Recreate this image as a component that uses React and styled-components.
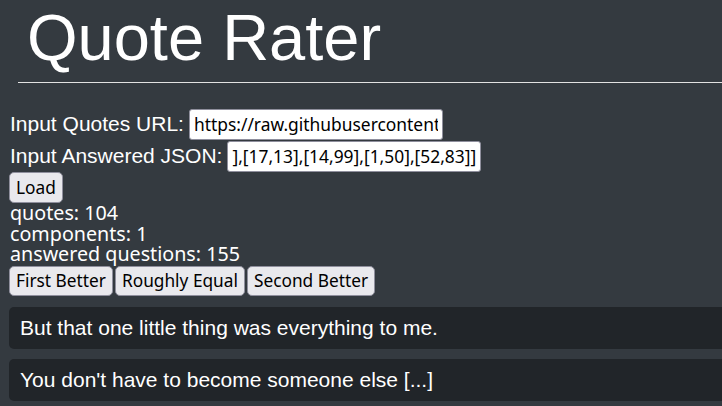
import React from 'react';
import styled, { createGlobalStyle } from 'styled-components';

const GlobalStyle = createGlobalStyle`
  html, body {
    margin: 0;
    padding: 0;
    background: #343a40;
    color: #fff;
    overflow: hidden;
  }
`;

const Page = styled.div`
  min-height: 406px;
`;

const Title = styled.h1`
  margin: 0 0 0 18px;
  padding: 6px 0 12px 9px;
  font-family: 'Liberation Sans', Arial, sans-serif;
  font-weight: 400;
  font-size: 65px;
  line-height: 64px;
  border-bottom: 1.3px solid #e2e2e2;
`;

const Content = styled.div`
  padding: 25px 0 0 9px;
`;

const Field = styled.div`
  display: flex;
  align-items: center;
  height: 32px;
`;

const Label = styled.label`
  font-family: 'Liberation Sans', Arial, sans-serif;
  font-size: 21px;
  margin: 0 5px 0 1px;
`;

const TextInput = styled.input`
  box-sizing: border-box;
  width: 254px;
  height: 31px;
  padding: 0 4px;
  border: 1px solid #8f8f9d;
  border-radius: 3px;
  background: #fff;
  color: #000;
  font-family: 'Noto Sans', sans-serif;
  font-size: 17.4px;
  outline: none;
`;

const Button = styled.button`
  box-sizing: border-box;
  height: ${(p) => (p.$tall ? '31px' : '30.5px')};
  padding: 0 6px;
  border: 1px solid #8f8f9d;
  border-radius: 5px;
  background: #e9e9ed;
  color: #000;
  font-family: 'Noto Sans', sans-serif;
  font-size: 17.3px;
  line-height: 1;
`;

const Stats = styled.div`
  margin: 0 0 1px 1px;
  font-family: 'Noto Sans', sans-serif;
  font-size: 19.7px;
  line-height: 20.6px;
`;

const ButtonRow = styled.div`
  display: flex;
  gap: 2px;
`;

const QuoteList = styled.div`
  margin: 11px -30px 0 0;
  display: flex;
  flex-direction: column;
  gap: 10px;
`;

const QuoteCard = styled.div`
  box-sizing: border-box;
  height: 42px;
  padding: 9px 11px;
  border-radius: 5px;
  background: #212529;
  font-family: 'Liberation Sans', Arial, sans-serif;
  font-size: 21px;
  line-height: 24px;
`;

const quotes = [
  'But that one little thing was everything to me.',
  "You don't have to become someone else [...]",
];

export default function App() {
  return (
    <Page>
      <GlobalStyle />
      <Title>Quote Rater</Title>
      <Content>
        <Field>
          <Label>Input Quotes URL:</Label>
          <TextInput
            readOnly
            value="https://raw.githubusercontent.com/quotes/quotes.json"
          />
        </Field>
        <Field>
          <Label>Input Answered JSON:</Label>
          <TextInput readOnly value="],[17,13],[14,99],[1,50],[52,83]]" />
        </Field>
        <Button $tall>Load</Button>
        <Stats>
          <div>quotes: 104</div>
          <div>components: 1</div>
          <div>answered questions: 155</div>
        </Stats>
        <ButtonRow>
          <Button>First Better</Button>
          <Button>Roughly Equal</Button>
          <Button>Second Better</Button>
        </ButtonRow>
        <QuoteList>
          {quotes.map((q) => (
            <QuoteCard key={q}>{q}</QuoteCard>
          ))}
        </QuoteList>
      </Content>
    </Page>
  );
}
